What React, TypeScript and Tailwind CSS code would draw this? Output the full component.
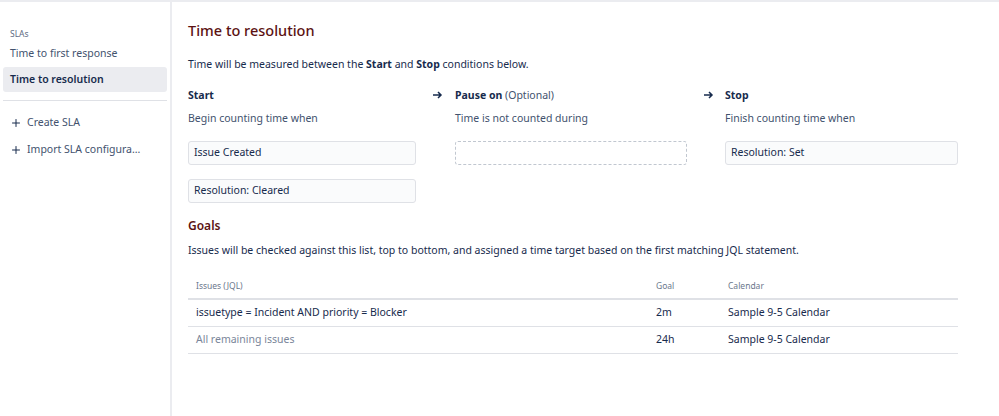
import { Plus } from 'lucide-react';

const rows = [
  { jql: 'issuetype = Incident AND priority = Blocker', goal: '2m', calendar: 'Sample 9-5 Calendar', muted: false },
  { jql: 'All remaining issues', goal: '24h', calendar: 'Sample 9-5 Calendar', muted: true },
];

const Arrow = () => (
  <svg width="10" height="8" viewBox="0 0 10 8" className="mt-[3px]">
    <path d="M0 4h8M5 1l3 3-3 3" stroke="#172b4d" strokeWidth="1.5" fill="none" />
  </svg>
);

const Box = ({ children }: { children: React.ReactNode }) => (
  <div className="h-[24px] flex items-center px-[5px] border border-[#dfe1e6] rounded-[3px] bg-[#fafbfc] text-[#172b4d]">
    {children}
  </div>
);

const App = () => {
  return (
    <div
      className="w-[999px] h-[416px] bg-white border-t-2 border-[#ebecf0] flex text-[10.5px] text-[#172b4d]"
      style={{ fontFamily: '"Noto Sans", "Open Sans", sans-serif' }}
    >
      <aside className="w-[172px] border-r-2 border-[#ebecf0] px-[3px] pt-[25px] shrink-0 text-[10.5px]">
        <div className="px-[7px] text-[8.5px] text-[#5e6c84] h-[14px] leading-[14px]">SLAs</div>
        <div className="px-[7px] h-[25px] leading-[25px] text-[#42526e]">Time to first response</div>
        <div className="px-[7px] h-[25px] leading-[25px] bg-[#ebecf0] rounded-[3px] font-semibold mt-[1px]">
          Time to resolution
        </div>
        <div className="border-t border-[#dfe1e6] mt-[8px] mb-[9px]" />
        <div className="px-[7px] h-[26px] flex items-center gap-[5px] text-[#42526e]">
          <Plus size={12} strokeWidth={2} className="text-[#172b4d]" />
          Create SLA
        </div>
        <div className="px-[7px] h-[26px] flex items-center gap-[5px] text-[#42526e] mt-[1px]">
          <Plus size={12} strokeWidth={2} className="text-[#172b4d]" />
          Import SLA configura...
        </div>
      </aside>

      <main className="flex-1 pl-[16px] pr-[42px] pt-[17px]">
        <h1 className="text-[14.5px] font-medium text-[#5c1212] leading-[22px]">Time to resolution</h1>
        <p className="mt-[16px] leading-[14px]">
          Time will be measured between the <b>Start</b> and <b>Stop</b> conditions below.
        </p>

        <div className="flex mt-[17px]">
          <div className="w-[228px]">
            <div className="font-bold h-[14px] leading-[14px]">Start</div>
            <div className="mt-[9px] leading-[14px] text-[#42526e]">Begin counting time when</div>
            <div className="mt-[16px] flex flex-col gap-[14px]">
              <Box>Issue Created</Box>
              <Box>Resolution: Cleared</Box>
            </div>
          </div>
          <div className="w-[39px] pl-[17px]">
            <Arrow />
          </div>
          <div className="w-[232px]">
            <div className="h-[14px] leading-[14px] text-[#42526e]">
              <b className="text-[#172b4d]">Pause on</b> (Optional)
            </div>
            <div className="mt-[9px] leading-[14px] text-[#42526e]">Time is not counted during</div>
            <div className="mt-[16px] h-[24px] border border-dashed border-[#c1c7d0] rounded-[3px]" />
          </div>
          <div className="w-[38px] pl-[17px]">
            <Arrow />
          </div>
          <div className="w-[233px]">
            <div className="font-bold h-[14px] leading-[14px]">Stop</div>
            <div className="mt-[9px] leading-[14px] text-[#42526e]">Finish counting time when</div>
            <div className="mt-[16px]">
              <Box>Resolution: Set</Box>
            </div>
          </div>
        </div>

        <h2 className="mt-[14px] text-[12px] font-semibold text-[#5c1212] leading-[18px]">Goals</h2>
        <p className="mt-[8px] leading-[14px]">
          Issues will be checked against this list, top to bottom, and assigned a time target based on the first matching JQL statement.
        </p>

        <table className="mt-[17px] w-full border-collapse">
          <thead>
            <tr className="border-b-2 border-[#dfe1e6] text-[8.5px] text-[#6b778c]">
              <th className="text-left font-normal px-[8px] h-[25px] w-[460px]">Issues (JQL)</th>
              <th className="text-left font-normal px-[8px] w-[72px]">Goal</th>
              <th className="text-left font-normal px-[8px]">Calendar</th>
            </tr>
          </thead>
          <tbody>
            {rows.map((r) => (
              <tr key={r.jql} className="border-b border-[#dfe1e6]">
                <td className={`px-[8px] h-[27px] ${r.muted ? 'text-[#7a869a]' : ''}`}>{r.jql}</td>
                <td className="px-[8px]">{r.goal}</td>
                <td className="px-[8px]">{r.calendar}</td>
              </tr>
            ))}
          </tbody>
        </table>
      </main>
    </div>
  );
};

export default App;
